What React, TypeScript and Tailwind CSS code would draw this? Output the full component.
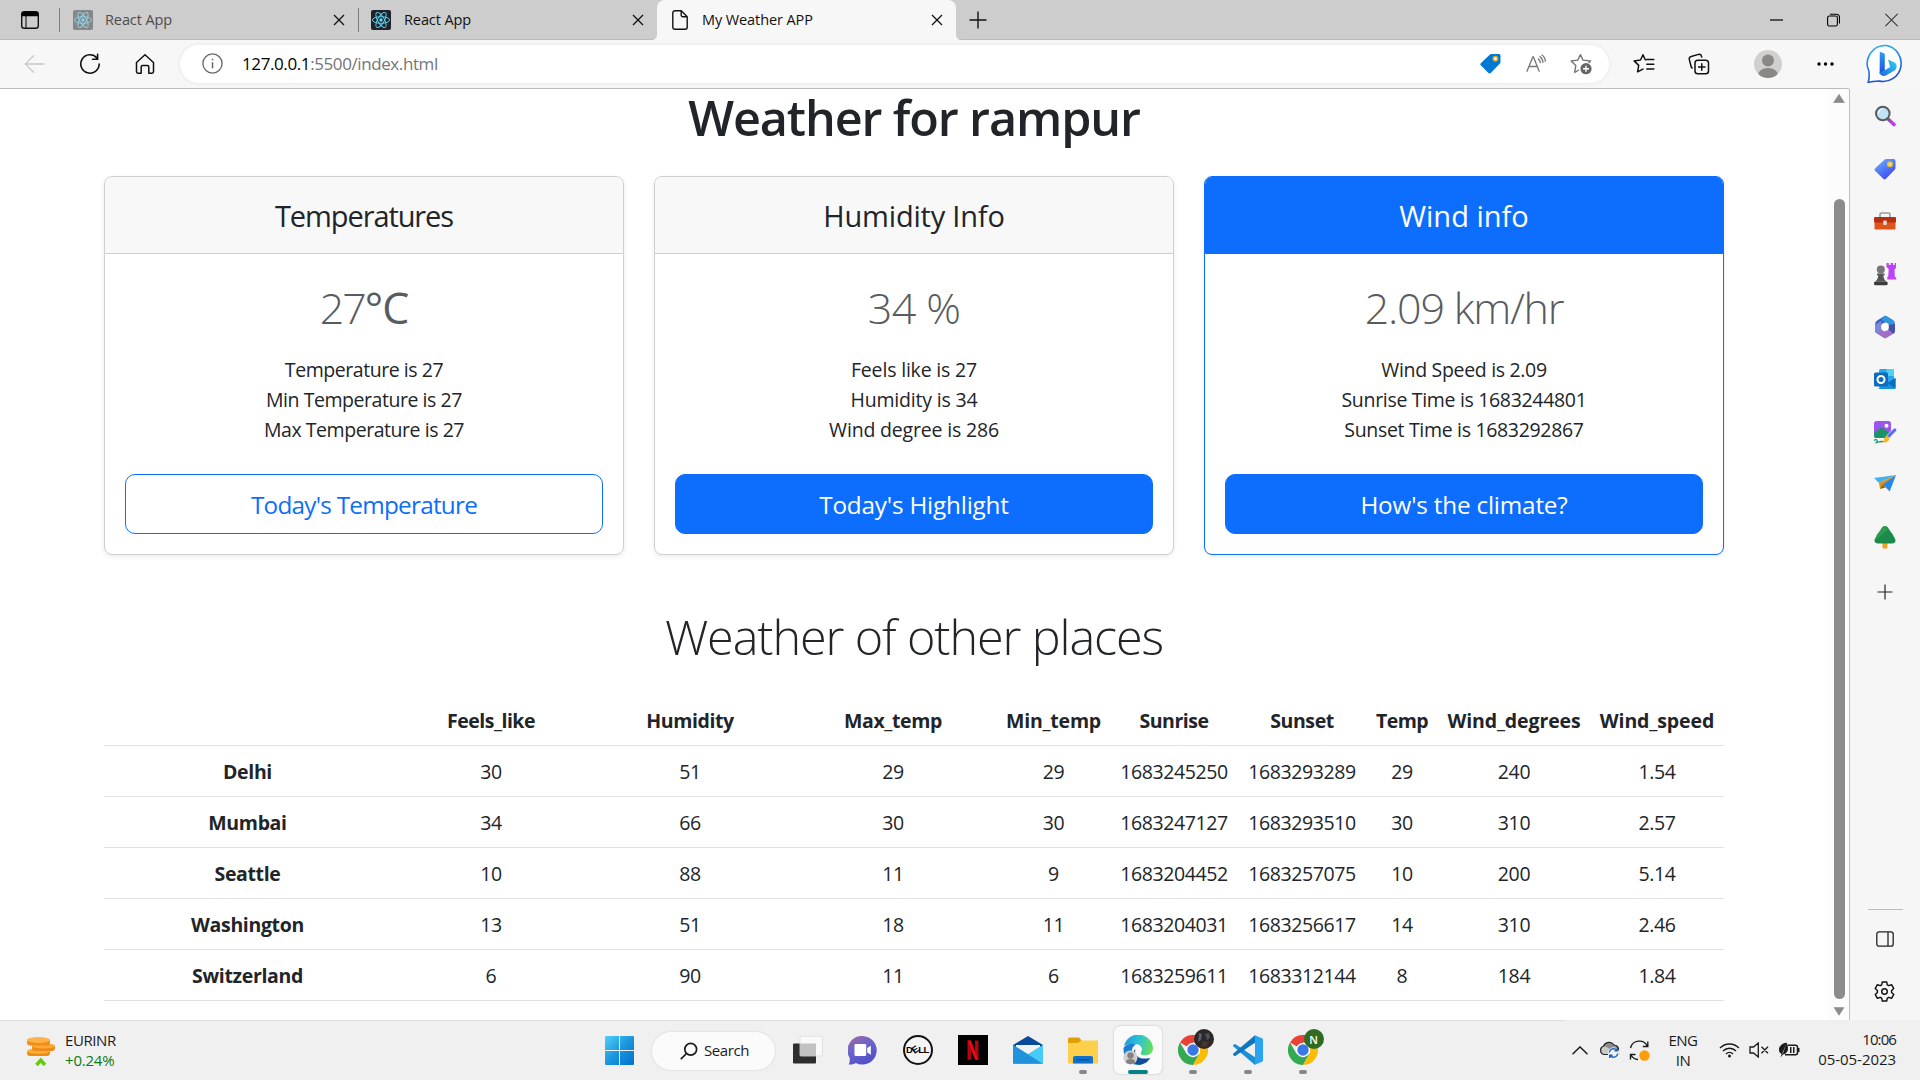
import type { ReactNode } from "react";

type Kids = { children: ReactNode };

function ReactLogo({ faded }: { faded?: boolean }) {
  return (
    <svg width="20" height="20" viewBox="0 0 20 20" className={faded ? "opacity-60" : ""}>
      <rect width="20" height="20" rx="2" fill={faded ? "#5a5a5a" : "#20232a"} />
      <g fill="none" stroke="#61dafb" strokeWidth="0.9">
        <ellipse cx="10" cy="10" rx="8.6" ry="3.3" />
        <ellipse cx="10" cy="10" rx="8.6" ry="3.3" transform="rotate(60 10 10)" />
        <ellipse cx="10" cy="10" rx="8.6" ry="3.3" transform="rotate(120 10 10)" />
      </g>
      <circle cx="10" cy="10" r="1.7" fill="#61dafb" />
    </svg>
  );
}

function CloseX() {
  return (
    <svg width="12" height="12" viewBox="0 0 12 12" stroke="#111" strokeWidth="1.3">
      <path d="M1 1l10 10M11 1L1 11" />
    </svg>
  );
}

function TabBar() {
  return (
    <div className="flex h-[40px] items-center bg-[#cdcdcd] shadow-[inset_0_-1px_0_#bababa]">
      <svg className="ml-[20px]" width="20" height="20" viewBox="0 0 20 20">
        <rect x="1.7" y="1.7" width="16.6" height="16.6" rx="2.6" fill="none" stroke="#111" strokeWidth="1.4" />
        <path d="M1.7 6.2V4a2.3 2.3 0 0 1 2.3-2.3h12A2.3 2.3 0 0 1 18.300 4v2.200z" fill="#000" />
        <path d="M6 6v12" stroke="#111" strokeWidth="1.1" />
      </svg>
      <div className="ml-[19px] h-[24px] w-px bg-[#7c7c7c]" />
      <div className="ml-[13px] flex w-[285px] items-center">
        <ReactLogo faded />
        <span className="ml-[12px] flex-1 text-[14.5px] tracking-[-0.1px] text-[#4c4c4c]">React App</span>
        <span className="mr-[13px]"><CloseX /></span>
      </div>
      <div className="h-[24px] w-px bg-[#7c7c7c]" />
      <div className="ml-[12px] flex w-[286px] items-center">
        <ReactLogo />
        <span className="ml-[13px] flex-1 text-[14.5px] tracking-[-0.1px] text-[#111]">React App</span>
        <span className="mr-[13px]"><CloseX /></span>
      </div>
      <div className="relative flex h-full w-[299px] items-center rounded-t-[8px] bg-[#f7f7f7] pl-[15px]">
        <svg className="absolute bottom-0 -left-[6px]" width="6" height="6"><path d="M6 0v6H0Q6 6 6 0" fill="#f7f7f7" /></svg>
        <svg className="absolute -right-[6px] bottom-0" width="6" height="6"><path d="M0 0v6h6Q0 6 0 0" fill="#f7f7f7" /></svg>
        <svg width="16" height="20" viewBox="0 0 16 20" fill="none" stroke="#111" strokeWidth="1.4" strokeLinejoin="round">
          <path d="M2.700.8h6.600l5.900 5.900v10.600a2 2 0 0 1-2 2H2.800a2 2 0 0 1-2-2V2.800a2 2 0 0 1 2-2zM9.200.8v4.400a1.500 1.500 0 0 0 1.500 1.500h4.500" />
        </svg>
        <span className="ml-[14px] flex-1 text-[14.5px] tracking-[-0.1px] text-[#111]">My Weather APP</span>
        <span className="mr-[13px]"><CloseX /></span>
      </div>
      <svg className="ml-[13px]" width="18" height="18" viewBox="0 0 18 18" stroke="#111" strokeWidth="1.4">
        <path d="M9 .5v17M.5 9h17" />
      </svg>
      <div className="flex-1" />
      <svg className="mr-[44px]" width="13" height="14" viewBox="0 0 13 14"><path d="M0 7h13" stroke="#000" strokeWidth="1.2" /></svg>
      <svg className="mr-[45px]" width="13" height="14" viewBox="0 0 13 14" fill="none" stroke="#000" strokeWidth="1.1">
        <rect x=".6" y="3" width="9.800" height="10" rx="1.8" />
        <path d="M3 1.200h6.500a3 3 0 0 1 3 3v6.300" />
      </svg>
      <svg className="mr-[22px]" width="13" height="14" viewBox="0 0 13 14" stroke="#333" strokeWidth="1.1"><path d="M.3 .8l12.400 12.400M12.700.8L.3 13.200" /></svg>
    </div>
  );
}

function Toolbar() {
  return (
    <div className="flex h-[49px] items-center bg-[#f7f7f7] pb-[2px]">
      <svg className="ml-[24px]" width="21" height="20" viewBox="0 0 21 20" fill="none" stroke="#c9c9c9" strokeWidth="1.3">
        <path d="M20.500 10H1.500M10 1.200L1.300 10l8.700 8.800" />
      </svg>
      <svg className="ml-[34px]" width="22" height="22" viewBox="0 0 22 22" fill="none" stroke="#111" strokeWidth="1.6" strokeLinecap="round">
        <path d="M20.200 11a9.200 9.200 0 1 1-2.300-6.100M18.600 1.300v5h-5" />
      </svg>
      <svg className="ml-[34px]" width="20" height="22" viewBox="0 0 20 22" fill="none" stroke="#111" strokeWidth="1.5" strokeLinejoin="round">
        <path d="M1.500 9.500L10 1.800l8.500 7.700v9.300a1.400 1.400 0 0 1-1.400 1.400h-3.300v-6.400a1.400 1.400 0 0 0-1.400-1.400H7.600a1.400 1.400 0 0 0-1.400 1.400v6.400H2.900a1.400 1.400 0 0 1-1.400-1.400z" />
      </svg>
      <div className="ml-[25px] flex h-[38px] w-[1429px] items-center rounded-full bg-white pl-[22px] shadow-[0_0_4px_rgba(0,0,0,0.08)]">
        <svg width="21" height="21" viewBox="0 0 21 21" fill="none" stroke="#666" strokeWidth="1.3">
          <circle cx="10.500" cy="10.500" r="9.600" />
          <path d="M10.500 9.300v6" strokeWidth="1.500" /><circle cx="10.500" cy="6.500" r=".6" fill="#666" strokeWidth=".6" />
        </svg>
        <span className="ml-[19px] flex-1 text-[17px] tracking-[-0.4px] text-[#757575]"><span className="text-black">127.0.0.1</span>:5500/index.html</span>
        <svg width="21" height="21" viewBox="0 0 21 21">
          <path d="M11.500 1h7.500a1.500 1.500 0 0 1 1.500 1.500v6.500a2 2 0 0 1-.6 1.400l-8.900 9.300a2 2 0 0 1-2.800 0L1 12.600a1.800 1.800 0 0 1 0-2.600l9-8.400a2 2 0 0 1 1.500-.6z" fill="#0078d4" />
          <circle cx="15.400" cy="5.700" r="2.200" fill="#fff" stroke="#e3a60b" strokeWidth="1.5" />
        </svg>
        <svg className="ml-[25px]" width="20" height="20" viewBox="0 0 20 20" fill="none" stroke="#767676" strokeWidth="1.300">
          <path d="M.8 17.800L6.800 3h.6l6 14.800M3 12.500h8.300M12 4.600q2.300 1.500 2.600 4.600M13.500 2.400q3.300 2 3.500 6.500M15.500.8q3.600 2 3.900 7" />
        </svg>
        <svg className="ml-[24px] mr-[17px]" width="22" height="22" viewBox="0 0 22 22" fill="none" stroke="#767676" strokeWidth="1.400" strokeLinejoin="round">
          <path d="M10.400 1.500l2.600 5.600 7.600.9-2 2M10.400 1.500L7.700 7.100l-6.600.9 4.700 4.600-1.200 6.700 4.400-2.300" />
          <circle cx="16" cy="15.700" r="5.600" fill="#666" stroke="none" />
          <path d="M16 12.700v6M13 15.700h6" stroke="#fff" />
        </svg>
      </div>
      <svg className="ml-[24px]" width="22" height="22" viewBox="0 0 22 22" fill="none" stroke="#111" strokeWidth="1.500" strokeLinejoin="round" strokeLinecap="round">
        <path d="M12.800 6.700h-.6L10 1.800 7.500 7l-6.400.9 4.600 4.500-1.100 6.400 5.400-2.700M13.800 6.600h7M13.800 11.300h7M13.800 16h7" />
      </svg>
      <svg className="ml-[33px]" width="22" height="22" viewBox="0 0 22 22" fill="none" stroke="#111" strokeWidth="1.500">
        <path d="M4.600 15.300a2.500 2.500 0 0 1-1.500-1.800L1.300 6.400a2.500 2.500 0 0 1 1.900-3L10.500 1.400a2.500 2.500 0 0 1 3 1.800l.4 1.400" />
        <rect x="7" y="7.200" width="13.500" height="13.500" rx="2.800" /><path d="M13.750 10.200v7.500M10 13.950h7.500" />
      </svg>
      <svg className="ml-[44px]" width="28" height="28" viewBox="0 0 28 28">
        <circle cx="14" cy="14" r="14" fill="#d2d0ce" />
        <circle cx="14" cy="10.500" r="6" fill="#8a8886" />
        <path d="M4.500 24.200a9.500 6.300 0 0 1 19 0A14 14 0 0 1 4.500 24.200z" fill="#8a8886" />
      </svg>
      <svg className="ml-[35px]" width="17" height="4" viewBox="0 0 17 4"><circle cx="2" cy="2" r="1.700" /><circle cx="8.500" cy="2" r="1.700" /><circle cx="15" cy="2" r="1.700" /></svg>
      <svg className="ml-[32px]" width="40" height="40" viewBox="0 0 40 40">
        <defs>
          <linearGradient id="bingRing" x1="0" y1="0" x2=".3" y2="1"><stop offset="0" stopColor="#2bb8f2" /><stop offset="1" stopColor="#1b4fd0" /></linearGradient>
          <linearGradient id="bingB" x1="0" y1="0" x2="0" y2="1"><stop offset="0" stopColor="#2d9cf4" /><stop offset="1" stopColor="#1c4fe0" /></linearGradient>
          <linearGradient id="bingC" x1="0" y1="1" x2="1" y2="0"><stop offset="0" stopColor="#2068e8" /><stop offset="1" stopColor="#2bd6e8" /></linearGradient>
        </defs>
        <path d="M20.500 1.500a18 18 0 1 1-7 35.600c-3-.5-7 .8-11.300 1.100 1.200-4 1.200-7 .7-11.200A18 18 0 0 1 20.500 1.500z" fill="#fff" stroke="url(#bingRing)" strokeWidth="1.600" />
        <path d="M13.800 7.700l4 1.600a1.500 1.500 0 0 1 1 1.400v16l-5.200 3.500z" fill="url(#bingB)" />
        <path d="M22.100 15.500l6 2.700c3.800 2 2.900 6.800.3 8.400l-8 4.700c-3.300 1.600-6.500 0-6.800-2.800l5.200-2.300 5.400-3.200-2.200-7.500z" fill="url(#bingC)" />
      </svg>
    </div>
  );
}

function WeatherCard({ title, value, lines, button, primary, filled, titleCls, valueCls, listCls, btnCls }: {
  title: string; value: ReactNode; lines: string[]; button: string; primary?: boolean; filled?: boolean; titleCls: string; valueCls: string; listCls: string; btnCls: string;
}) {
  return (
    <div className={`flex h-[379px] w-[520px] flex-col overflow-hidden rounded-[8px] border bg-white text-center shadow-[0_2px_5px_rgba(0,0,0,0.075)] ${primary ? "border-[#0d6efd]" : "border-[#cfcfcf]"}`}>
      <div className={`flex h-[77px] items-center justify-center border-b pt-[2px] text-[29px] leading-[36px] ${titleCls} ${primary ? "border-[#0d6efd] bg-[#0d6efd] text-white" : "border-[#cfcfcf] bg-[#f8f8f8]"}`}>{title}</div>
      <div className="flex flex-1 flex-col px-[20px] pt-[29px] pb-[20px]">
        <div className={`text-[43px] leading-[50px] font-light text-[#585c60] ${valueCls}`}>{value}</div>
        <ul className={`mt-[22px] flex-1 text-[19.5px] leading-[30px] ${listCls}`}>
          {lines.map((l) => <li key={l}>{l}</li>)}
        </ul>
        <div className={`flex h-[60px] items-center justify-center rounded-[10px] border border-[#0d6efd] pt-[2px] text-[24.3px] leading-[36px] ${btnCls} ${filled ? "bg-[#0d6efd] text-white" : "text-[#0d6efd]"}`}>{button}</div>
      </div>
    </div>
  );
}

const HEAD = ["", "Feels_like", "Humidity", "Max_temp", "Min_temp", "Sunrise", "Sunset", "Temp", "Wind_degrees", "Wind_speed"];
const HEAD_TRACK = ["", "tracking-[-0.5px]", "tracking-[-0.4px]", "tracking-[-0.35px]", "tracking-[-0.2px]", "tracking-[-0.5px]", "tracking-[-0.4px]", "tracking-[-0.6px]", "tracking-[-0.1px]", "tracking-[-0.1px]"];
const ROWS = [
  ["Delhi", "30", "51", "29", "29", "1683245250", "1683293289", "29", "240", "1.54"],
  ["Mumbai", "34", "66", "30", "30", "1683247127", "1683293510", "30", "310", "2.57"],
  ["Seattle", "10", "88", "11", "9", "1683204452", "1683257075", "10", "200", "5.14"],
  ["Washington", "13", "51", "18", "11", "1683204031", "1683256617", "14", "310", "2.46"],
  ["Switzerland", "6", "90", "11", "6", "1683259611", "1683312144", "8", "184", "1.84"],
];
const GRID = "grid h-[51px] grid-cols-[287px_200px_198px_208px_113px_128px_128px_72px_152px_134px] items-center border-b border-[#dee2e6] pt-[2px] text-center";

function Page() {
  return (
    <main className="flex h-full w-[1828px] flex-col items-center bg-white text-[#212529]">
      <h1 className="h-[56px] text-[48.5px] leading-[56px] font-semibold tracking-[-1.1px]">Weather for rampur</h1>
      <div className="mt-[31px] flex gap-[30px]">
        <WeatherCard title="Temperatures" value={<><span className="tracking-[-2px]">27</span><span className="font-normal">°C</span></>} lines={["Temperature is 27", "Min Temperature is 27", "Max Temperature is 27"]} button="Today's Temperature" titleCls="tracking-[-1.1px]" valueCls="tracking-[-1px]" listCls="tracking-[-0.45px]" btnCls="tracking-[-0.75px]" />
        <WeatherCard title="Humidity Info" value="34 %" lines={["Feels like is 27", "Humidity is 34", "Wind degree is 286"]} button="Today's Highlight" filled titleCls="tracking-[-0.2px]" valueCls="tracking-[-0.6px]" listCls="tracking-[-0.18px]" btnCls="tracking-[-0.2px]" />
        <WeatherCard title="Wind info" value="2.09 km/hr" lines={["Wind Speed is 2.09", "Sunrise Time is 1683244801", "Sunset Time is 1683292867"]} button="How's the climate?" filled primary titleCls="tracking-[0px]" valueCls="tracking-[-1.2px]" listCls="tracking-[-0.32px]" btnCls="tracking-[-0.2px]" />
      </div>
      <h2 className="mt-[51px] text-[48.5px] leading-[60px] font-light tracking-[-1.1px]">Weather of other places</h2>
      <div className="mt-[29px] w-[1620px] text-[19.5px]">
        <div className={GRID}>
          {HEAD.map((h, i) => <div key={h} className={`font-bold ${HEAD_TRACK[i]}`}>{h}</div>)}
        </div>
        {ROWS.map((r) => (
          <div key={r[0]} className={GRID}>
            {r.map((c, i) => <div key={i} className={i === 0 ? "font-bold tracking-[-0.35px]" : "tracking-[-0.38px]"}>{c}</div>)}
          </div>
        ))}
      </div>
    </main>
  );
}

function Scrollbar() {
  return (
    <div className="flex h-full w-[21px] flex-col items-center bg-[#fcfcfc] pl-px">
      <svg className="mt-[5px]" width="12" height="9" viewBox="0 0 12 9"><path d="M6 .3L11.500 8.700H.5z" fill="#8b8b8b" stroke="#8b8b8b" strokeLinejoin="round" strokeWidth=".6" /></svg>
      <div className="mt-[96px] h-[800px] w-[11px] rounded-full bg-[#8b8b8b]" />
      <svg className="mt-[8px]" width="12" height="9" viewBox="0 0 12 9"><path d="M6 8.700L11.500.3H.5z" fill="#8b8b8b" /></svg>
    </div>
  );
}

function Slot({ children }: Kids) {
  return <div className="flex h-[52.6px] items-center justify-center pr-px">{children}</div>;
}

function Sidebar() {
  return (
    <aside className="flex h-full w-[71px] flex-col border-l border-[#bdbdbd] bg-[#f6f6f6] pt-px">
      <Slot>
        <svg width="22" height="22" viewBox="0 0 22 22">
          <path d="M14 14l6 5.500" stroke="#c238f5" strokeWidth="3.600" strokeLinecap="round" />
          <path d="M13 13l3 2.800" stroke="#666" strokeWidth="2" />
          <circle cx="8.800" cy="8.500" r="6.800" fill="#bfe2f7" stroke="#5b5b5b" strokeWidth="2" />
          <path d="M4.500 8a4.500 4.500 0 0 1 4-4" stroke="#fff" fill="none" strokeWidth="1.200" />
        </svg>
      </Slot>
      <Slot>
        <svg width="22" height="22" viewBox="0 0 22 22">
          <defs><linearGradient id="tagG" x1="0" y1="0" x2=".7" y2="1"><stop offset="0" stopColor="#6db6fb" /><stop offset="1" stopColor="#3d45f5" /></linearGradient></defs>
          <path d="M12 1h7.500a2 2 0 0 1 2 2v7a2 2 0 0 1-.6 1.400l-8.700 9a2.200 2.200 0 0 1-3.200 0L1.200 13a2 2 0 0 1 0-2.800l9.200-8.500A2.400 2.400 0 0 1 12 1z" fill="url(#tagG)" />
          <circle cx="16" cy="6.200" r="2.200" fill="#ddd" stroke="#f0c41b" strokeWidth="1.600" />
        </svg>
      </Slot>
      <Slot>
        <svg width="24" height="20" viewBox="0 0 24 20">
          <path d="M7 6V3.600A1.600 1.600 0 0 1 8.600 2h6.800A1.600 1.600 0 0 1 17 3.600V6" fill="none" stroke="#9a9a9a" strokeWidth="1.600" />
          <rect x="1.500" y="9" width="21" height="9.500" rx="1.200" fill="#e0531b" />
          <rect x="1" y="6" width="22" height="5.500" rx="1" fill="#b5300e" />
          <rect x="10.200" y="9.500" width="3.600" height="4.500" rx="1" fill="#ddd" />
        </svg>
      </Slot>
      <Slot>
        <svg width="24" height="24" viewBox="0 0 24 24">
          <path d="M13.500 1h2.300v2h1.800V1h2.400v2h1.700V1H23v5l-1.500 1.500.3 7 1.500 1.500v1.500h-9V15l1-1 .4-7L13.500 5z" fill="#bb45f5" />
          <circle cx="7.800" cy="7.500" r="4" fill="#777" />
          <path d="M4 11.500h7.600v1.800h-1.200c0 3 1.200 5 3 6.200H2.200c1.800-1.200 3-3.200 3-6.200H4z" fill="#555" />
          <rect x="1" y="19.500" width="13.700" height="3.800" rx="1.500" fill="#3c3c3c" />
        </svg>
      </Slot>
      <Slot>
        <svg width="22" height="24" viewBox="0 0 22 24">
          <path d="M11 .8L3.500 5.200A5 5 0 0 0 1 9.500v7.300L7.500 19V9.500L13.500 6z" fill="#3a62c8" />
          <path d="M9 2l2-1.200a2 2 0 0 1 1.600.2L19 5a4 4 0 0 1 2 3.500v6L14.500 11V9L7.500 5z" fill="#2f96dc" />
          <path d="M21 9v7a3.500 3.500 0 0 1-1.800 3L14 17.500V10z" fill="#4a4fae" />
          <path d="M1 16.500a3 3 0 0 0 1.800 2l6.700 4.200a3 3 0 0 0 3.200 0l6.800-4L14 14l-3.500 2.500L7.500 14l-3 3z" fill="#a06fc4" />
          <path d="M1 9.500L7.500 6v9l-3.500 3a3 3 0 0 1-3-2.800z" fill="#7d86dc" />
          <circle cx="11" cy="12" r="3.900" fill="#fff" />
        </svg>
      </Slot>
      <Slot>
        <svg width="22" height="22" viewBox="0 0 22 22">
          <rect x="5" y="1" width="15" height="19" rx="1.500" fill="#28a8ea" />
          <path d="M12.500 1H20v7h-7.500z" fill="#50d0f5" /><path d="M5 8h8v6H5z" fill="#0a5fae" />
          <path d="M4 21h16.500a1 1 0 0 0 1-1V10l-8 5z" fill="#1493df" /><path d="M21.500 10v10.500L13.500 15z" fill="#0d6bbd" />
          <rect x="0" y="4.500" width="14" height="14" rx="1.500" fill="#0f6cbd" />
          <circle cx="7" cy="11.500" r="3.500" fill="none" stroke="#fff" strokeWidth="2" />
        </svg>
      </Slot>
      <Slot>
        <svg width="24" height="24" viewBox="0 0 24 24">
          <rect x="1" y="1" width="17" height="17" rx="2.500" fill="#9a55ee" />
          <path d="M1 13l6-4.500a3 3 0 0 1 3.500 0L18 14v1.500a2.500 2.500 0 0 1-2.500 2.500h-12A2.500 2.500 0 0 1 1 15.500z" fill="#1d9465" />
          <circle cx="13.500" cy="5.800" r="2" fill="#fff" />
          <path d="M1 20.500c3-2.500 4 .5 2.500 2 3-.5 4-1.500 7-.8" fill="none" stroke="#169b67" strokeWidth="1.300" />
          <path d="M23 8.500c1 1 .8 2-.2 3l-6.500 6.500-2.500-2.500L20 9.200c1-1 2-1.500 3-.7z" fill="#5a6cf5" stroke="#f6f6f6" strokeWidth=".7" />
          <path d="M13.500 15.800l2.700 2.700c0 3-3 4.500-6.700 4 1.700-1.200 1-4.700 4-6.700z" fill="#f6b820" />
        </svg>
      </Slot>
      <Slot>
        <svg width="22" height="20" viewBox="0 0 22 20">
          <path d="M0 4L22 1 5 9z" fill="#3fb2f2" /><path d="M22 1L5 9l1 6z" fill="#e59108" />
          <path d="M6 15l3-4.500 2.500 3z" fill="#9a5a08" /><path d="M22 1L9 10.500l6.700 7z" fill="#2687ea" />
        </svg>
      </Slot>
      <Slot>
        <svg width="22" height="24" viewBox="0 0 22 24">
          <rect x="8.500" y="17" width="5" height="6.500" rx="1" fill="#f2a21c" />
          <path d="M11 1c2 0 3 1.500 4.500 4 1.500 2.600 3.500 4 4.500 7 .4 1 1.500 2 1.500 3.500 0 2-1.500 3-3.500 3H4c-2 0-3.500-1-3.500-3C.5 14 1.600 13 2 12c1-3 3-4.400 4.500-7C8 2.500 9 1 11 1z" fill="#1c8a4b" />
          <path d="M11 1C9 1 8 2.500 6.500 5 5 7.600 3 9 2 12c-.4 1-1.500 2-1.500 3.500L14 5z" fill="#38a852" opacity=".6" />
        </svg>
      </Slot>
      <div className="mt-[21px] flex justify-center pr-px">
        <svg width="16" height="16" viewBox="0 0 16 16" stroke="#222" strokeWidth="1.200"><path d="M8 .5v15M.5 8h15" /></svg>
      </div>
      <div className="flex-1" />
      <div className="h-px w-[35px] self-center bg-[#bdbdbd]" />
      <svg className="mt-[21px] self-center" width="18" height="16" viewBox="0 0 18 16" fill="none" stroke="#222" strokeWidth="1.300"><rect x=".8" y=".8" width="16.400" height="14.400" rx="2.300" /><path d="M12 1v14" /></svg>
      <svg className="mt-[33px] mb-[17px] ml-[23px]" width="23" height="23" viewBox="0 0 24 24" fill="none" stroke="#111" strokeWidth="1.500" strokeLinejoin="round">
        <path d="M9.700 2h4.600l.6 3 1.600.9 2.900-1 2.300 4-2.300 2.100v2l2.300 2.100-2.300 4-2.900-1-1.600.9-.6 3H9.700l-.6-3-1.600-.9-2.900 1-2.300-4L4.600 13v-2L2.300 8.900l2.300-4 2.900 1 1.600-.9z" />
        <circle cx="12" cy="12" r="2.900" />
      </svg>
    </aside>
  );
}

function Task({ children, active, dot }: Kids & { active?: boolean; dot?: boolean }) {
  return (
    <div className="flex h-full w-[55px] flex-col items-center">
      <div className={`mt-[5px] flex h-[48px] w-[48px] items-center justify-center rounded-[6px] ${active ? "bg-[#fafafa] shadow-[0_0_2px_rgba(0,0,0,0.25)]" : ""}`}>{children}</div>
      {dot && <div className="-mt-[4px] h-[4px] w-[8px] rounded-full bg-[#878787]" />}
      {active && <div className="-mt-[4px] h-[4px] w-[20px] rounded-full bg-[#038387]" />}
    </div>
  );
}

function Chrome({ badge }: { badge: ReactNode }) {
  return (
    <div className="relative">
      <svg width="30" height="30" viewBox="0 0 30 30">
        <path d="M15 15L2 7.500A15 15 0 0 1 28 7.500H15z" fill="#ea4335" />
        <path d="M2 7.500A15 15 0 0 0 15 30l6.500-11.300L15 15 8.500 18.700z" fill="#34a853" />
        <path d="M28 7.500A15 15 0 0 1 15 30l6.500-11.300L21 9l-3-1.500z" fill="#fbbc05" />
        <circle cx="15" cy="15" r="7.200" fill="#fff" /><circle cx="15" cy="15" r="5.700" fill="#3b78e7" />
      </svg>
      <div className="absolute -top-[6px] left-[16px]">{badge}</div>
    </div>
  );
}

function Taskbar() {
  return (
    <footer className="flex h-[60px] items-center bg-[#f0f0f0] text-[#1b1b1b]">
      <div className="flex h-full w-[605px] items-center border-t border-[#dcdcdc] pl-[27px]">
        <svg width="28" height="30" viewBox="0 0 28 30">
          <rect x="0" y="14" width="23" height="6" rx="3" fill="#f08c12" /><ellipse cx="11.500" cy="15" rx="11.500" ry="2.800" fill="#fbb03a" />
          <rect x="5" y="8.500" width="23" height="6.500" rx="3" fill="#ef8a14" /><ellipse cx="16.500" cy="10" rx="11.500" ry="2.600" fill="#fba834" />
          <rect x="0" y="2.500" width="23" height="7" rx="3" fill="#f28d16" /><ellipse cx="11.500" cy="4" rx="11.500" ry="3" fill="#fdb347" />
          <path d="M9.500 29l4.300-4.800L18 29" fill="none" stroke="#68c814" strokeWidth="3.600" />
        </svg>
        <div className="mb-[2px] ml-[10px] text-[15px] leading-[20px] tracking-[-0.2px]">
          <div className="tracking-[-0.4px]">EURINR</div>
          <div className="text-[#0d7a0d]">+0.24%</div>
        </div>
      </div>
      <div className="flex h-full w-[960px] items-center border-t border-[#dcdcdc]">
        <svg width="29" height="29" viewBox="0 0 29 29">
          <defs><linearGradient id="winG" gradientUnits="userSpaceOnUse" x1="0" y1="0" x2="29" y2="29"><stop offset="0" stopColor="#4fd0fb" /><stop offset=".5" stopColor="#1b95de" /><stop offset="1" stopColor="#0070cf" /></linearGradient></defs>
          <path d="M1 0h13v14H0V1a1 1 0 0 1 1-1zM15 0h13a1 1 0 0 1 1 1v13H15zM0 15h14v14H1a1 1 0 0 1-1-1zM15 15h14v13a1 1 0 0 1-1 1H15z" fill="url(#winG)" />
        </svg>
        <div className="ml-[18px] flex h-[38px] w-[123px] items-center rounded-full bg-[#fbfbfb] pl-[28px] shadow-[0_0_2px_rgba(0,0,0,0.16)]">
          <svg width="18" height="18" viewBox="0 0 18 18" fill="none" stroke="#1b1b1b" strokeWidth="1.700"><circle cx="10.700" cy="7.200" r="5.900" /><path d="M6.500 11.500L.8 17.200" /></svg>
          <span className="ml-[6px] text-[15px] tracking-[-0.4px]">Search</span>
        </div>
        <div className="ml-[5px] flex h-full">
          <Task>
            <svg width="30" height="28" viewBox="0 0 30 28"><rect x="0" y="7.500" width="23" height="20" rx="1" fill="#2d2d2d" /><rect x="7" y=".3" width="22.500" height="19.700" rx="1" fill="#f9f9f9" stroke="#dadada" strokeWidth=".8" /><rect x="7" y="7.500" width="16" height="12.500" fill="#c2c2c2" /></svg>
          </Task>
          <Task>
            <svg width="29" height="29" viewBox="0 0 29 29">
              <defs><linearGradient id="chatG" x1="0" y1="0" x2=".5" y2="1"><stop offset="0" stopColor="#a06b9c" /><stop offset=".5" stopColor="#6b64cc" /><stop offset="1" stopColor="#5050c8" /></linearGradient></defs>
              <path d="M14.500 0a14.300 14.300 0 1 1-6.700 27C5.500 28.500 3 28.700.7 28.500c1-2 1.400-4 .8-7A14.300 14.300 0 0 1 14.500 0z" fill="url(#chatG)" />
              <rect x="6.500" y="8" width="11.700" height="12" rx="1.200" fill="#fff" /><path d="M19.200 12l3.600-2.300v9L19.200 16.500z" fill="#fff" />
            </svg>
          </Task>
          <Task>
            <div className="flex h-[30px] w-[30px] items-center justify-center rounded-full border-2 border-[#111] bg-[#f4f4f4]">
              <span className="flex items-center font-['Liberation_Sans'] text-[9.5px] leading-none font-bold tracking-[-0.5px] text-black"><span>D</span><span className="-rotate-[35deg]">E</span><span>LL</span></span>
            </div>
          </Task>
          <Task>
            <svg width="30" height="30" viewBox="0 0 30 30"><rect width="30" height="30" /><path d="M9.500 5.500H13v19l-3.500.5zM17 5.500h3.500v19.500L17 24.500z" fill="#b1060f" /><path d="M9.500 5.500H13l7.500 19.500-3.500-.5z" fill="#e50914" /></svg>
          </Task>
          <Task>
            <svg width="30" height="28" viewBox="0 0 30 28">
              <path d="M0 9L15 0l15 9v4H0z" fill="#0a4a9a" /><path d="M3 9h24v8L15 20 3 17z" fill="#f2f2f2" />
              <path d="M0 9l15 9.500L30 9v18a1 1 0 0 1-1 1H1a1 1 0 0 1-1-1z" fill="#31b4ee" /><path d="M0 9l30 18.500H1a1 1 0 0 1-1-1z" fill="#2091dc" /><path d="M30 9L15 18.300 30 28z" fill="#45cbf5" />
            </svg>
          </Task>
          <Task dot>
            <svg width="30" height="27" viewBox="0 0 30 27">
              <path d="M0 2a1.500 1.500 0 0 1 1.500-1.500H11L14 4v4H0z" fill="#dfa006" /><path d="M0 6h10l3-2.500h17v22a1 1 0 0 1-1 1H1a1 1 0 0 1-1-1z" fill="#fdcf4a" />
              <path d="M5 26.500V21a2 2 0 0 1 2-2h16a2 2 0 0 1 2 2v5.500z" fill="#1073c9" /><path d="M8.500 22.800h13" stroke="#0a4c94" strokeWidth="1.200" />
            </svg>
          </Task>
          <Task active>
            <svg width="30" height="30" viewBox="0 0 30 30">
              <defs>
                <linearGradient id="edgeA" x1="0" y1=".3" x2="1" y2=".5"><stop offset="0" stopColor="#2098dc" /><stop offset=".5" stopColor="#2cc3d5" /><stop offset="1" stopColor="#66e055" /></linearGradient>
              </defs>
              <path d="M1 11A14.700 14.700 0 0 1 30 13c0 5-3.600 7.200-7.500 7.200-4.500 0-5.500-1.700-4.500-3 2.500-4-.5-8-5.500-8.200C8 8.800 3.500 9 1 11z" fill="url(#edgeA)" />
              <path d="M.5 13C3 9 9 8 13 9.500c-3.500 1.500-4.500 5-4 9 .7 5 4.500 9.500 10 10.500-9 3-19-3-18.500-16z" fill="#1780d0" />
              <path d="M12.500 14c-2 6 3.500 11.500 14.800 9C24 28.500 18.500 30.500 14 29.500 8 27 8 18 12.500 14z" fill="#0f4d9c" />
              <circle cx="7.500" cy="22.500" r="7" fill="#d2d0ce" /><circle cx="7.500" cy="20.500" r="3.200" fill="#85827f" /><path d="M2.800 27.500a4.700 3.400 0 0 1 9.400 0 7 7 0 0 1-9.400 0z" fill="#85827f" />
            </svg>
          </Task>
          <Task dot>
            <Chrome badge={<svg width="20" height="20" viewBox="0 0 20 20"><circle cx="10" cy="10" r="10" fill="#2b2827" /><path d="M5 4l3 1-1 6-3 2z" fill="#56606c" /><path d="M11 5l4-1 1 5-3 2z" fill="#4a4f58" /><path d="M9 12l6 1-3 5-5-1z" fill="#4b3430" /></svg>} />
          </Task>
          <Task dot>
            <svg width="30" height="30" viewBox="0 0 30 30">
              <path d="M2.600 9.300a1.300 1.300 0 0 0-1.600 0L.4 10a1 1 0 0 0 0 1.500L22 30v-7.700z" fill="#1d8fd8" />
              <path d="M2.600 20.700a1.300 1.300 0 0 1-1.600 0L.4 20a1 1 0 0 1 0-1.500L22 .3v7.400z" fill="#1077bd" />
              <path d="M22 .3l7 3a1.500 1.500 0 0 1 1 1.300v20.800a1.500 1.500 0 0 1-1 1.300l-7 3z" fill="#2aa3f0" />
            </svg>
          </Task>
          <Task dot>
            <Chrome badge={<div className="flex h-[20px] w-[20px] items-center justify-center rounded-full bg-[#2f6b22] text-[11px] leading-none font-semibold text-white">N</div>} />
          </Task>
        </div>
      </div>
      <div className="flex h-full flex-1 items-center">
        <svg className="ml-[7px]" width="16" height="9" viewBox="0 0 16 9" fill="none" stroke="#1b1b1b" strokeWidth="1.400"><path d="M.5 8.300L8 .9l7.500 7.400" /></svg>
        <svg className="ml-[11px]" width="21" height="18" viewBox="0 0 21 18">
          <path d="M5 13.500a4.300 4.300 0 0 1-.5-8.300A6 6 0 0 1 15 4a4.500 4.500 0 0 1 4.500 5v4.500z" fill="#8c8c8c" stroke="#222" strokeWidth="1.200" />
          <path d="M5 13a4 4 0 0 1 0-7.500c3 0 6 2 9 7.500z" fill="#c9c9c9" />
          <circle cx="14.500" cy="12" r="5.800" fill="#f0f0f0" />
          <path d="M10.300 11.500a4.300 4.300 0 0 1 7.700-2M18.700 12.500a4.300 4.300 0 0 1-7.700 2M18.300 7v2.800h-2.800M10.700 17v-2.800h2.800" fill="none" stroke="#1268c3" strokeWidth="1.400" />
        </svg>
        <svg className="ml-[9px]" width="21" height="21" viewBox="0 0 21 21" fill="none" stroke="#1b1b1b" strokeWidth="1.400">
          <path d="M1.500 8a9 9 0 0 1 17-1.500M18.800 1.500v5h-5M9 19.500a9 9 0 0 1-7-4.500M1.500 19.500v-5h5" /><circle cx="15.500" cy="15.500" r="5.200" fill="#ff9c0a" stroke="none" />
        </svg>
        <div className="ml-[17px] w-[32px] text-center text-[15px] leading-[20px] tracking-[-0.5px]"><div>ENG</div><div>IN</div></div>
        <svg className="ml-[20px]" width="21" height="16" viewBox="0 0 21 16" fill="none" stroke="#1b1b1b" strokeWidth="1.400">
          <path d="M1 6a13.200 13.200 0 0 1 19 0M4 9a9 9 0 0 1 13 0M7 12a5 5 0 0 1 7 0" /><circle cx="10.500" cy="14" r="1.500" fill="#1b1b1b" stroke="none" />
        </svg>
        <svg className="ml-[9px]" width="20" height="16" viewBox="0 0 20 16" fill="none" stroke="#1b1b1b" strokeWidth="1.300"><path d="M1 5h3.500L9.300 1v14L4.500 11H1zM12.500 4.800l6.500 6.500M19 4.800l-6.500 6.500" /></svg>
        <svg className="ml-[10px]" width="21" height="16" viewBox="0 0 21 16">
          <path d="M9 3.300h7.500a2 2 0 0 1 2 2v5.500a2 2 0 0 1-2 2H6" fill="none" stroke="#1b1b1b" strokeWidth="1.500" />
          <path d="M19 6h1.500v4H19zM11 5h1.500v6H11zM14 5h1.500v6H14z" fill="#1b1b1b" />
          <path d="M7.500 1.200C3 1.500 0 4.500.5 8.500c.2 2 1.500 3.300 3.200 3.500L2 14.500M7.500 1.200c1.500 4 2 10.500-3.800 10.800" fill="#1b1b1b" stroke="#1b1b1b" />
        </svg>
        <div className="mr-[24px] mb-[2px] flex-1 text-right text-[15px] leading-[20px]"><div className="tracking-[-0.9px]">10:06</div><div className="tracking-[-0.05px]">05-05-2023</div></div>
      </div>
    </footer>
  );
}

export default function App() {
  return (
    <div className="flex h-[1080px] w-[1920px] flex-col overflow-hidden font-['Open_Sans','Noto_Sans',sans-serif]">
      <TabBar />
      <Toolbar />
      <div className="flex h-[931px]">
        <div className="flex shadow-[0_-1px_0_#bababa]">
          <Page />
          <Scrollbar />
        </div>
        <Sidebar />
      </div>
      <Taskbar />
    </div>
  );
}
